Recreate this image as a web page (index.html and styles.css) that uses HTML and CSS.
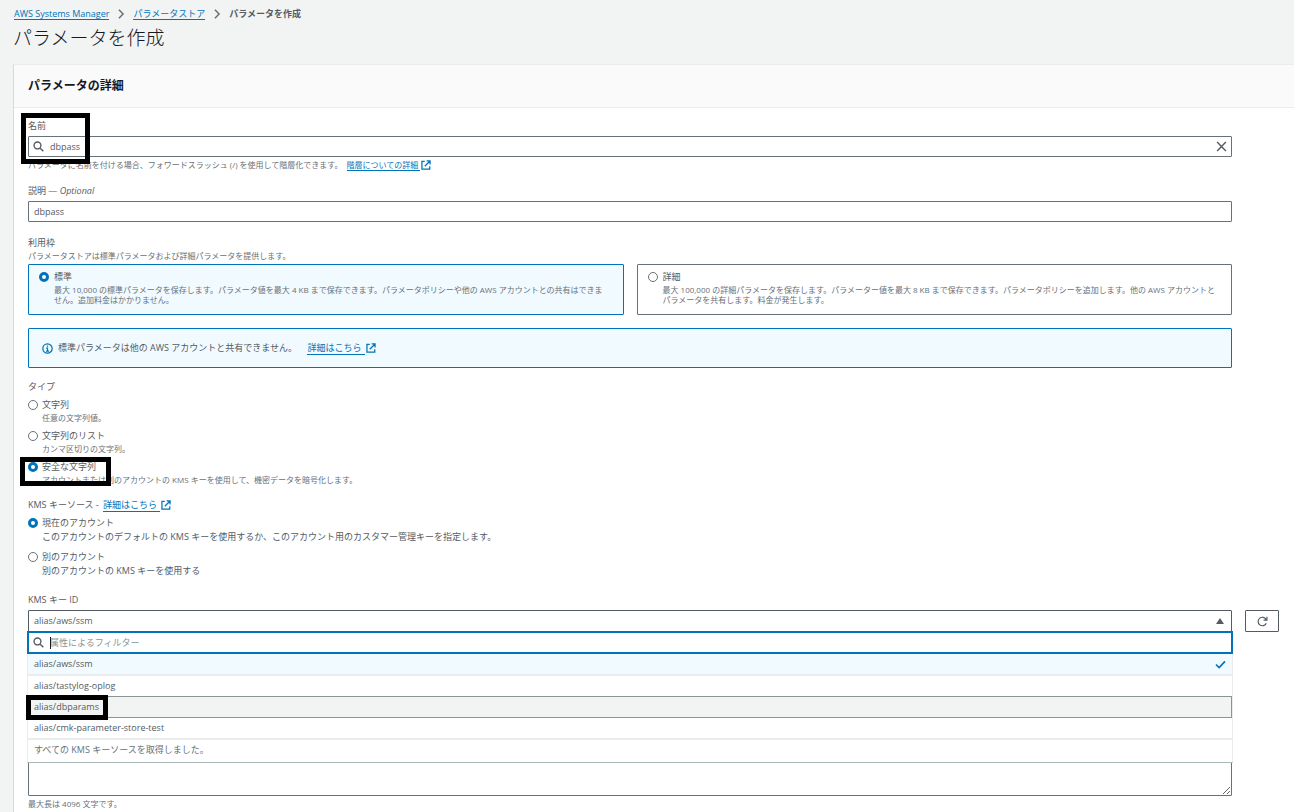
FILE: index.html
```html
<!DOCTYPE html>
<html lang="ja">
<head>
<meta charset="utf-8">
<meta name="viewport" content="width=device-width, initial-scale=1">
<title>パラメータを作成</title>
<link rel="stylesheet" href="styles.css">
</head>
<body>
<svg class="sprite" aria-hidden="true">
  <symbol id="ext" viewBox="0 0 16 16"><path d="M6 2H1.500V14.500H14V10M9 1.500H14.500V7M14.500 1.500L6 10" fill="none" stroke="currentColor" stroke-width="2"/></symbol>
  <symbol id="search" viewBox="0 0 16 16"><circle cx="6.500" cy="6.500" r="5" fill="none" stroke="currentColor" stroke-width="2"/><path d="M10.500 10.500L15 15" stroke="currentColor" stroke-width="2.200"/></symbol>
  <symbol id="chevron" viewBox="0 0 8 12"><path d="M1.500 1L6.500 6L1.500 11" fill="none" stroke="currentColor" stroke-width="1.800"/></symbol>
</svg>
<main class="page">
  <nav class="breadcrumb" aria-label="パンくずリスト">
    <a href="#">AWS Systems Manager</a>
    <svg class="chevron"><use href="#chevron"/></svg>
    <a href="#">パラメータストア</a>
    <svg class="chevron"><use href="#chevron"/></svg>
    <strong>パラメータを作成</strong>
  </nav>
  <h1 class="title">パラメータを作成</h1>
  <section class="panel">
    <header class="panel-header"><h2>パラメータの詳細</h2></header>
    <form class="form">
      <div class="field name-field">
        <label class="label" for="name">名前</label>
        <div class="input-wrap">
          <svg class="search-icon"><use href="#search"/></svg>
          <input class="input with-icon" id="name" type="text" value="dbpass">
          <button class="clear" type="button" aria-label="クリア"><svg viewBox="0 0 10 10"><path d="M1 1L9 9M9 1L1 9" stroke="currentColor" stroke-width="1.300"/></svg></button>
        </div>
        <p class="hint">パラメータに名前を付ける場合、フォワードスラッシュ (/) を使用して階層化できます。 <a class="hint-link" href="#">階層についての詳細 </a><svg class="ext"><use href="#ext"/></svg></p>
        <span class="mark mark-name"></span>
      </div>

      <div class="field">
        <label class="label" for="desc">説明 — <em>Optional</em></label>
        <input class="input" id="desc" type="text" value="dbpass">
      </div>

      <fieldset class="field">
        <legend class="label flush">利用枠</legend>
        <p class="hint tier-hint">パラメータストアは標準パラメータおよび詳細パラメータを提供します。</p>
        <div class="tiles">
          <label class="tile selected">
            <input class="radio" type="radio" name="tier" checked>
            <span class="option"><span class="option-title">標準</span><span class="tile-text">最大 10,000 の標準パラメータを保存します。パラメータ値を最大 4 KB まで保存できます。パラメータポリシーや他の AWS アカウントとの共有はできません。追加料金はかかりません。</span></span>
          </label>
          <label class="tile">
            <input class="radio" type="radio" name="tier">
            <span class="option"><span class="option-title">詳細</span><span class="tile-text">最大 100,000 の詳細パラメータを保存します。パラメーター値を最大 8 KB まで保存できます。パラメータポリシーを追加します。他の AWS アカウントとパラメータを共有します。料金が発生します。</span></span>
          </label>
        </div>
      </fieldset>

      <div class="alert">
        <svg class="info" viewBox="0 0 16 16"><circle cx="8" cy="8" r="6.800" fill="none" stroke="currentColor" stroke-width="1.800"/><path d="M8 3.500V5.500M6 7.500H8V11.500M5.800 11.700H10.300" fill="none" stroke="currentColor" stroke-width="1.700"/></svg>
        <p>標準パラメータは他の AWS アカウントと共有できません。 <a class="alert-link" href="#">詳細はこちら </a><svg class="ext"><use href="#ext"/></svg></p>
      </div>

      <fieldset class="field type-field">
        <legend class="label">タイプ</legend>
        <div class="radios">
          <label class="choice"><input class="radio" type="radio" name="type"><span class="option"><span class="option-title">文字列</span><span class="option-hint">任意の文字列値。</span></span></label>
          <label class="choice"><input class="radio" type="radio" name="type"><span class="option"><span class="option-title">文字列のリスト</span><span class="option-hint">カンマ区切りの文字列。</span></span></label>
          <label class="choice"><input class="radio" type="radio" name="type" checked><span class="option"><span class="option-title">安全な文字列</span><span class="option-hint">アカウントまたは別のアカウントの KMS キーを使用して、機密データを暗号化します。</span></span><span class="mark mark-type"></span></label>
        </div>
      </fieldset>

      <fieldset class="field source-field">
        <legend class="label">KMS キーソース - <a class="source-link" href="#">詳細はこちら </a><svg class="ext"><use href="#ext"/></svg></legend>
        <div class="radios">
          <label class="choice"><input class="radio" type="radio" name="source" checked><span class="option"><span class="option-title">現在のアカウント</span><span class="option-title">このアカウントのデフォルトの KMS キーを使用するか、このアカウント用のカスタマー管理キーを指定します。</span></span></label>
          <label class="choice"><input class="radio" type="radio" name="source"><span class="option"><span class="option-title">別のアカウント</span><span class="option-title">別のアカウントの KMS キーを使用する</span></span></label>
        </div>
      </fieldset>

      <div class="field key-field">
        <label class="label" for="key">KMS キー ID</label>
        <div class="key-row">
          <div class="select-wrap">
            <select class="input select" id="key"><option>alias/aws/ssm</option></select>
            <svg class="arrow" viewBox="0 0 8 6"><path d="M4 0L8 6H0Z" fill="currentColor"/></svg>
            <div class="menu">
              <div class="filter">
                <svg class="search-icon"><use href="#search"/></svg>
                <input class="filter-input" type="text" placeholder="属性によるフィルター" aria-label="属性によるフィルター">
                <span class="caret"></span>
              </div>
              <ul class="options" role="listbox" aria-label="KMS キー ID">
                <li class="item current" role="option" aria-selected="true">alias/aws/ssm<svg class="check" viewBox="0 0 12 10"><path d="M1 5L4.500 8.500L11 1.500" fill="none" stroke="currentColor" stroke-width="1.800"/></svg></li>
                <li class="item" role="option">alias/tastylog-oplog</li>
                <li class="item hovered" role="option">alias/dbparams<span class="mark mark-option"></span></li>
                <li class="item last" role="option">alias/cmk-parameter-store-test</li>
              </ul>
              <p class="menu-foot">すべての KMS キーソースを取得しました。</p>
            </div>
          </div>
          <button class="refresh" type="button" aria-label="更新"><svg viewBox="0 0 16 16"><path d="M13.500 10.500A6.200 6.200 0 1 1 13.500 5.500M14.500 1V6H9.500" fill="none" stroke="currentColor" stroke-width="1.700"/></svg></button>
        </div>
      </div>

      <div class="field value-field">
        <textarea class="input value" aria-label="値"></textarea>
        <p class="hint">最大長は 4096 文字です。</p>
      </div>
    </form>
  </section>
</main>
</body>
</html>
```
FILE: styles.css
```css
* { box-sizing: border-box; }

body {
  margin: 0;
  background: #f2f3f3;
  color: #545b64;
  font-family: "Open Sans", "Noto Sans CJK JP", sans-serif;
  font-size: 9px;
  line-height: 14px;
}

h1, h2, p, ul, fieldset { margin: 0; padding: 0; }
fieldset { border: 0; min-width: 0; }
ul { list-style: none; }
input, select, button, textarea { font: inherit; color: inherit; margin: 0; }

a {
  color: #0073bb;
  text-decoration: none;
  border-bottom: 1px solid #0073bb;
  white-space: pre;
}

.sprite { display: none; }

.page {
  display: flex;
  flex-direction: column;
  min-height: 100vh;
  padding: 7px 0 0 13px;
}

.breadcrumb {
  display: flex;
  align-items: center;
  gap: 8px;
  padding-left: 1px;
}
.breadcrumb a { line-height: 11px; }
.chevron { width: 8px; height: 10px; color: #687078; }

.title {
  margin: 2px 0 11px;
  color: #16191f;
  font-size: 19px;
  font-weight: 300;
  line-height: 30px;
}

.panel {
  flex: 1;
  background: #fff;
  border-top: 1px solid #eaeded;
  border-left: 1px solid #d5dbdb;
}
.panel-header {
  padding: 10px 14px;
  background: #fafafa;
  border-bottom: 1px solid #eaeded;
}
.panel-header h2 {
  color: #16191f;
  font-size: 12px;
  line-height: 22px;
}
.panel-header h2, .breadcrumb strong { font-weight: 700; }

.form { padding: 11px 15px 2px 14px; }
.field, .alert { margin: 0 47px 14px 0; }
.name-field { position: relative; margin-bottom: 13px; }

.label { display: block; margin-bottom: 3px; padding: 0; }
.flush { margin-bottom: 0; }

.input {
  display: block;
  width: 100%;
  height: 21px;
  padding: 0 5px;
  background: #fff;
  border: 1px solid #687078;
  border-radius: 1px;
  outline: 0;
}
.input-wrap, .select-wrap { position: relative; }
.with-icon { padding-left: 21px; }
.search-icon {
  position: absolute;
  top: 5px;
  left: 5px;
  width: 11px;
  height: 11px;
  color: #545b64;
}
.clear {
  position: absolute;
  top: 5px;
  right: 5px;
  display: flex;
  padding: 0;
  border: 0;
  background: none;
}
.clear svg { width: 11px; height: 11px; }

.hint {
  margin-top: 2px;
  color: #687078;
  font-size: 8px;
  line-height: 12px;
}
.hint-link { margin-left: 2px; }
.ext {
  width: 10px;
  height: 10px;
  margin-left: 1px;
  color: #0073bb;
  vertical-align: -2px;
}

.tier-hint { margin: 0 0 3px; line-height: 11px; }
.tiles {
  display: grid;
  grid-template-columns: 1fr 1fr;
  gap: 13px;
}
.tile {
  display: flex;
  gap: 5px;
  padding: 5px 15px 9px 10px;
  border: 1px solid #687078;
  border-radius: 1px;
}
.selected { background: #f1faff; border-color: #0073bb; }
.option { display: block; }
.option-title { display: block; }
.tile-text {
  display: block;
  margin-top: 1px;
  color: #687078;
  font-size: 8px;
  line-height: 10px;
}
.option-hint {
  display: block;
  color: #687078;
  font-size: 8px;
  line-height: 12px;
}

.radio {
  appearance: none;
  flex: none;
  width: 10px;
  height: 10px;
  margin-top: 2px;
  background: #fff;
  border: 1px solid #687078;
  border-radius: 50%;
}
.radio:checked { border: 3px solid #0073bb; }

.alert {
  display: flex;
  align-items: center;
  gap: 5px;
  min-height: 40px;
  margin-top: -1px;
  margin-bottom: 12px;
  padding: 0 13px;
  background: #f1faff;
  border: 1px solid #0073bb;
  border-radius: 1px;
}
.info { width: 11px; height: 11px; color: #0073bb; }
.alert-link { margin-left: 8px; }
.alert-link, .source-link { padding-right: 1px; }
.source-link { margin-left: 2px; }

.radios { display: flex; flex-direction: column; gap: 5px; }
.choice { position: relative; display: flex; gap: 4px; }
.type-field { margin-bottom: 12px; }
.type-field .label, .source-field .label { margin-bottom: 4px; }
.source-field { margin-bottom: 15px; }
.source-field .radios { gap: 6px; }

.key-field { margin-right: 0; margin-bottom: 24px; }
.key-row { display: flex; gap: 13px; }
.select-wrap { flex: 1; }
.select { appearance: none; height: 22px; border-color: #545b64; }
.arrow {
  position: absolute;
  top: 8px;
  right: 8px;
  width: 8px;
  height: 6px;
}
.refresh {
  display: flex;
  align-items: center;
  justify-content: center;
  width: 34px;
  height: 22px;
  padding: 0;
  background: #fff;
  border: 1px solid #545b64;
  border-radius: 1px;
}
.refresh svg { width: 11px; height: 11px; }

.menu {
  position: absolute;
  z-index: 2;
  top: 21px;
  left: -1px;
  right: -1px;
  background: #fff;
  border: 1px solid #eaeded;
  border-top: 0;
  border-bottom-color: #aab7b8;
}
.filter {
  position: relative;
  height: 23px;
  margin: 0 -1px;
  border: 2px solid #0073bb;
}
.filter .search-icon { top: 4px; left: 4px; }
.filter-input {
  display: block;
  width: 100%;
  height: 19px;
  padding: 0 21px;
  border: 0;
  outline: 0;
  background: none;
}
.filter-input::placeholder { color: #879596; opacity: 1; }
.caret {
  position: absolute;
  top: 4px;
  left: 21px;
  width: 1px;
  height: 12px;
  background: #16191f;
}
.item {
  position: relative;
  display: flex;
  align-items: center;
  justify-content: space-between;
  height: 20px;
  padding: 0 6px;
}
.current, .last { height: 22px; border-bottom: 2px solid #eaeded; }
.current { background: #f1faff; }
.hovered {
  height: 22px;
  padding: 0 5px;
  background: #f2f3f3;
  border: 1px solid #879596;
}
.check { width: 11px; height: 9px; color: #0073bb; }
.menu-foot { padding: 3px 6px 5px; color: #687078; }

.value-field { margin-bottom: 0; }
.value { height: 140px; min-height: 140px; resize: vertical; }

/* Highlight frames drawn over the content */
.mark {
  position: absolute;
  z-index: 3;
  border: 5px solid #000;
  pointer-events: none;
}
.mark-name { top: -6px; left: -7px; width: 69px; height: 51px; }
.mark-type { top: -3px; left: -8px; width: 91px; height: 29px; }
.mark-option { top: -2px; left: -3px; width: 82px; height: 25px; }
```
